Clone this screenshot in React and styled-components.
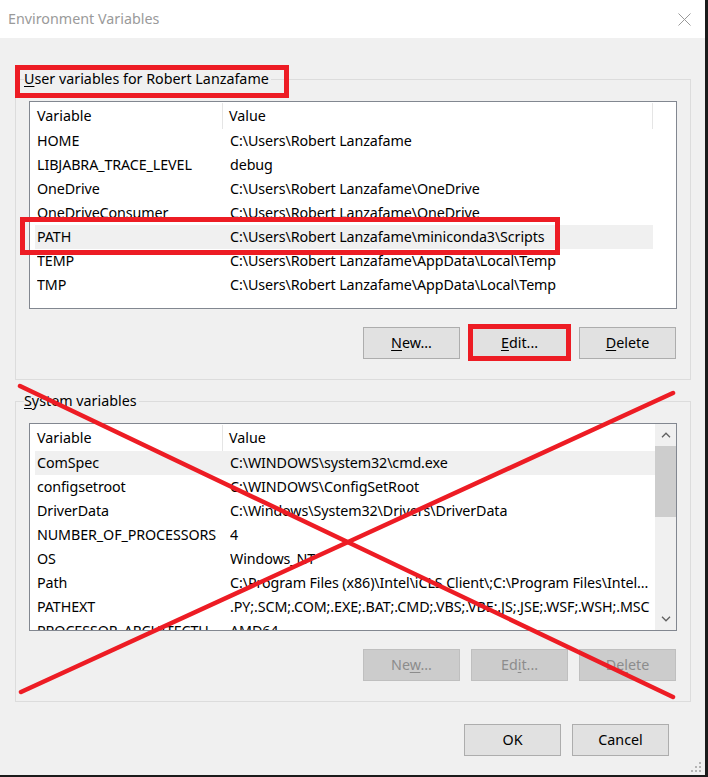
import React from 'react';
import styled, { createGlobalStyle, css } from 'styled-components';

const Global = createGlobalStyle`
  html, body { margin: 0; padding: 0; background: #1b1b1b; }
  body { width: 708px; height: 777px; overflow: hidden; font-family: "Noto Sans", "Open Sans", sans-serif; }
  *, *::before, *::after { box-sizing: border-box; }
`;

const RED = '#ed1c24';
const FS = '14.3px';

const markBox = css`
  &::after {
    content: '';
    position: absolute;
    border: 5px solid ${RED};
    pointer-events: none;
    z-index: 5;
  }
`;

const Screen = styled.div`
  width: 708px;
  height: 777px;
  background: #1b1b1b;
`;

const Window = styled.div`
  position: relative;
  width: 705px;
  height: 775px;
  background: #f0f0f0;
  display: flex;
  flex-direction: column;
  font-size: ${FS};
  color: #000;
  u { text-decoration: underline; text-underline-offset: 2px; text-decoration-thickness: 1px; }
`;

const TitleBar = styled.div`
  flex: none;
  height: 38px;
  background: #fff;
  display: flex;
  align-items: center;
  justify-content: space-between;
  padding-left: 8px;
`;

const Title = styled.span`
  color: #9a9a9a;
  font-size: ${FS};
  line-height: 20px;
`;

const Close = styled.div`
  width: 42px;
  height: 38px;
  display: flex;
  align-items: center;
  justify-content: center;
`;

const Content = styled.div`
  flex: 1;
  display: flex;
  flex-direction: column;
  padding: 31px 0 0 15px;
`;

const Group = styled.fieldset`
  margin: ${p => p.$top}px 0 0 0;
  width: 676px;
  min-width: 0;
  border: 1px solid #dcdcdc;
  padding: 12px 13px 20px 13px;
  display: flex;
  flex-direction: column;
`;

const Legend = styled.legend`
  position: relative;
  padding: 0 2px 0 0;
  margin-left: -5px;
  line-height: 20px;
  font-size: ${FS};
  ${p => p.$marked && markBox}
  &::after { left: -9px; top: -4px; bottom: -9px; right: -18px; }
`;

const List = styled.div`
  height: 208px;
  border: 1px solid #828790;
  background: #fff;
  display: flex;
  position: relative;
`;

const ListBody = styled.div`
  flex: 1;
  min-width: 0;
  display: flex;
  flex-direction: column;
  overflow: ${p => (p.$clip ? 'hidden' : 'visible')};
`;

const Header = styled.div`
  flex: none;
  height: 27px;
  display: flex;
  align-items: stretch;
`;

const HeadCell = styled.div`
  flex: none;
  width: ${p => p.$w}px;
  display: flex;
  align-items: center;
  padding-left: ${p => (p.$first ? 7 : 6)}px;
  padding-bottom: 1px;
  border-right: ${p => (p.$sep ? '1px solid #e5e5e5' : 'none')};
  margin: 1px 0 0 0;
  white-space: nowrap;
`;

const Rows = styled.div`
  margin-left: 5px;
  width: ${p => p.$w}px;
  display: flex;
  flex-direction: column;
`;

const Row = styled.div`
  position: relative;
  flex: none;
  height: 24px;
  display: grid;
  grid-template-columns: 193px 1fr;
  align-items: center;
  padding-left: 2px;
  background: ${p => (p.$hl ? '#f0f0f0' : 'transparent')};
  ${p => p.$marked && markBox}
  &::after { left: -15px; top: -8px; width: 540px; height: 38px; }
`;

const Cell = styled.span`
  white-space: nowrap;
  overflow: hidden;
  text-overflow: ellipsis;
  letter-spacing: -0.1px;
  padding: 0 ${p => (p.$key ? 6 : 0)}px 1px 0;
`;

const Scrollbar = styled.div`
  flex: none;
  width: 21px;
  background: #f0f0f0;
  display: flex;
  flex-direction: column;
`;

const Arrow = styled.div`
  flex: none;
  height: 22px;
  display: flex;
  align-items: center;
  justify-content: center;
`;

const Thumb = styled.div`
  flex: none;
  height: 71px;
  background: #cdcdcd;
`;

const Track = styled.div`
  flex: 1;
`;

const ButtonRow = styled.div`
  display: flex;
  justify-content: flex-end;
  gap: 11px;
  margin-top: ${p => p.$top}px;
  padding-right: ${p => p.$right}px;
`;

const Btn = styled.button`
  position: relative;
  width: 97px;
  height: 32px;
  padding: 0 0 2px 0;
  border: 1px solid #adadad;
  background: #e1e1e1;
  color: #000;
  font-family: inherit;
  font-size: ${FS};
  ${p => p.disabled && css`
    background: #cccccc;
    border-color: #bfbfbf;
    color: #8c8c8c;
  `}
  ${p => p.$marked && markBox}
  &::after { left: -4px; top: -4px; right: -4px; bottom: -3px; }
`;

const Overlay = styled.svg`
  position: absolute;
  left: 0;
  top: 0;
  pointer-events: none;
  z-index: 6;
`;

const Grip = styled.svg`
  position: absolute;
  right: 3px;
  bottom: 2px;
`;

const userVars = [
  ['HOME', 'C:\\Users\\Robert Lanzafame'],
  ['LIBJABRA_TRACE_LEVEL', 'debug'],
  ['OneDrive', 'C:\\Users\\Robert Lanzafame\\OneDrive'],
  ['OneDriveConsumer', 'C:\\Users\\Robert Lanzafame\\OneDrive'],
  ['PATH', 'C:\\Users\\Robert Lanzafame\\miniconda3\\Scripts', true, true],
  ['TEMP', 'C:\\Users\\Robert Lanzafame\\AppData\\Local\\Temp'],
  ['TMP', 'C:\\Users\\Robert Lanzafame\\AppData\\Local\\Temp'],
];

const sysVars = [
  ['ComSpec', 'C:\\WINDOWS\\system32\\cmd.exe', true],
  ['configsetroot', 'C:\\WINDOWS\\ConfigSetRoot'],
  ['DriverData', 'C:\\Windows\\System32\\Drivers\\DriverData'],
  ['NUMBER_OF_PROCESSORS', '4'],
  ['OS', 'Windows_NT'],
  ['Path', 'C:\\Program Files (x86)\\Intel\\iCLS Client\\;C:\\Program Files\\Intel...'],
  ['PATHEXT', '.PY;.SCM;.COM;.EXE;.BAT;.CMD;.VBS;.VBE;.JS;.JSE;.WSF;.WSH;.MSC'],
  ['PROCESSOR_ARCHITECTURE', 'AMD64'],
];

const Chevron = ({ up }) => (
  <svg width="10" height="6" viewBox="0 0 10 6">
    <path d={up ? 'M1 5.2 L5 1.2 L9 5.2' : 'M1 0.8 L5 4.8 L9 0.8'} fill="none" stroke="#606060" strokeWidth="1.3" />
  </svg>
);

function VarList({ rows, scroll }) {
  const rowsW = scroll ? 620 : 618;
  return (
    <List>
      <ListBody $clip={scroll}>
        <Header>
          <HeadCell $w={193} $first $sep>Variable</HeadCell>
          <HeadCell $w={430} $sep={!scroll}>Value</HeadCell>
        </Header>
        <Rows $w={rowsW}>
          {rows.map(([k, v, hl, marked]) => (
            <Row key={k} $hl={hl} $marked={marked}>
              <Cell $key>{k}</Cell>
              <Cell>{v}</Cell>
            </Row>
          ))}
        </Rows>
      </ListBody>
      {scroll && (
        <Scrollbar>
          <Arrow><Chevron up /></Arrow>
          <Thumb />
          <Track />
          <Arrow><Chevron /></Arrow>
        </Scrollbar>
      )}
    </List>
  );
}

export default function App() {
  return (
    <Screen>
      <Global />
      <Window>
        <TitleBar>
          <Title>Environment Variables</Title>
          <Close>
            <svg width="13" height="13" viewBox="0 0 13 13">
              <path d="M0.5 0.5 L12.5 12.5 M12.5 0.5 L0.5 12.5" stroke="#999" strokeWidth="1" />
            </svg>
          </Close>
        </TitleBar>
        <Content>
          <Group $top={0}>
            <Legend $marked><u>U</u>ser variables for Robert Lanzafame</Legend>
            <VarList rows={userVars} />
            <ButtonRow $top={18} $right={1}>
              <Btn><u>N</u>ew...</Btn>
              <Btn $marked><u>E</u>dit...</Btn>
              <Btn><u>D</u>elete</Btn>
            </ButtonRow>
          </Group>
          <Group $top={11}>
            <Legend><u>S</u>ystem variables</Legend>
            <VarList rows={sysVars} scroll />
            <ButtonRow $top={18} $right={1}>
              <Btn disabled>Ne<u>w</u>...</Btn>
              <Btn disabled>Ed<u>i</u>t...</Btn>
              <Btn disabled>De<u>l</u>ete</Btn>
            </ButtonRow>
          </Group>
          <ButtonRow $top={22} $right={36}>
            <Btn>OK</Btn>
            <Btn>Cancel</Btn>
          </ButtonRow>
        </Content>
        <Overlay width="705" height="775" viewBox="0 0 705 775">
          <line x1="20" y1="386" x2="673" y2="697" stroke={RED} strokeWidth="4.5" strokeLinecap="round" />
          <line x1="673" y1="393" x2="21" y2="692" stroke={RED} strokeWidth="4.5" strokeLinecap="round" />
        </Overlay>
        <Grip width="12" height="12" viewBox="0 0 12 12">
          {[[9, 1], [9, 5], [5, 5], [9, 9], [5, 9], [1, 9]].map(([x, y]) => (
            <rect key={`${x}-${y}`} x={x} y={y} width="2" height="2" fill="#b5b5b5" />
          ))}
        </Grip>
      </Window>
    </Screen>
  );
}
